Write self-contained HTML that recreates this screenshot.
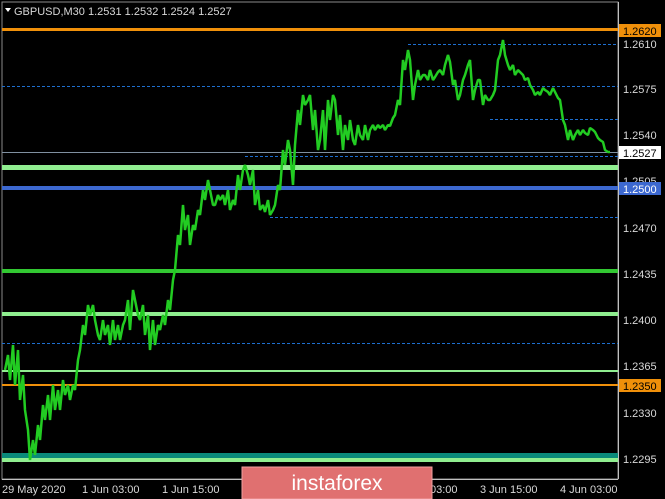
<!DOCTYPE html><html><head><style>
body{margin:0;background:#000;width:665px;height:499px;overflow:hidden;font-family:"Liberation Sans",sans-serif}
</style></head><body>
<svg width="665" height="499" xmlns="http://www.w3.org/2000/svg" style="position:absolute;left:0;top:0">
<rect width="665" height="499" fill="#000"/>
<rect x="2" y="2" width="616" height="477" fill="none" stroke="#8a8a8a" stroke-width="1"/>
<g stroke-dasharray="3,2" stroke="#1e6fd0" stroke-width="1">
<line x1="408" y1="44.5" x2="618" y2="44.5"/>
<line x1="2" y1="86.5" x2="618" y2="86.5"/>
<line x1="490" y1="119.5" x2="618" y2="119.5"/>
<line x1="245" y1="156.5" x2="618" y2="156.5"/>
<line x1="270" y1="217.5" x2="618" y2="217.5"/>
<line x1="2" y1="343.5" x2="618" y2="343.5"/>
</g>
<rect x="2" y="28" width="616" height="3" fill="#f0900a"/>
<line x1="2" y1="152.5" x2="618" y2="152.5" stroke="#8090a0"/>
<rect x="2" y="165" width="616" height="5" fill="#90ee90"/>
<rect x="2" y="186" width="616" height="4" fill="#3c68d0"/>
<rect x="2" y="269" width="616" height="4" fill="#32c832"/>
<rect x="2" y="312" width="616" height="4" fill="#90ee90"/>
<rect x="2" y="370" width="616" height="2" fill="#90ee90"/>
<rect x="2" y="384" width="616" height="2" fill="#f0900a"/>
<rect x="2" y="453" width="616" height="5" fill="#0a8a7a"/>
<rect x="2" y="458" width="616" height="4" fill="#90ee90"/>
<polyline fill="none" stroke="#22cc22" stroke-width="2.5" stroke-linejoin="bevel" points="5,370 8,355 10,380 13,345 15,385 18,350 20,400 23,375 25,410 28,430 30,460 33,440 35,455 38,425 40,440 43,405 45,420 48,395 50,420 53,385 55,410 58,390 60,410 63,380 65,395 68,385 70,400 73,385 75,390 78,360 80,350 83,325 85,335 88,305 90,315 93,305 95,320 98,335 100,340 103,320 105,335 108,325 110,345 113,320 115,340 118,325 120,340 123,325 125,320 128,300 130,330 133,290 135,300 138,315 140,320 143,305 145,335 148,315 150,350 153,320 155,345 158,325 160,330 163,315 165,325 168,300 170,310 173,280 175,270 178,235 180,245 183,205 185,230 188,215 190,245 193,225 195,230 198,210 200,215 203,190 205,200 208,180 210,190 213,205 215,205 218,195 220,200 223,195 225,205 228,190 230,210 233,200 235,205 238,175 240,190 243,170 245,165 248,175 250,185 253,170 255,205 258,190 260,210 263,205 265,212 268,200 270,215 273,210 275,205 278,185 280,190 283,150 285,165 288,140 290,150 293,185 295,145 298,110 300,125 303,95 305,105 308,100 310,95 313,130 315,110 318,150 320,140 323,110 325,150 328,100 330,120 333,95 335,100 338,135 340,115 343,150 345,125 348,140 350,120 353,140 355,145 358,125 360,135 363,140 365,125 368,140 370,130 373,125 375,130 378,125 380,128 383,125 385,130 388,125 390,126 393,118 395,115 398,100 400,105 403,60 405,70 408,50 410,60 413,100 415,85 418,70 420,80 423,75 425,75 428,80 430,70 433,80 435,77 438,72 440,70 443,75 445,65 448,55 450,62 453,85 455,80 458,100 460,95 463,80 465,75 468,65 470,60 473,100 475,90 478,80 480,80 483,105 485,95 488,100 490,100 493,95 495,90 498,60 500,55 503,40 505,55 508,65 510,70 513,65 515,75 518,70 520,72 523,75 525,80 528,78 530,85 533,90 535,95 538,92 540,95 543,88 545,90 548,92 550,95 553,88 555,92 558,98 560,100 563,120 565,125 568,140 570,130 573,140 575,135 578,130 580,135 583,130 585,133 588,135 590,128 593,130 595,132 598,138 600,140 603,142 605,150 608,152 610,152"/>
<line x1="618.5" y1="2" x2="618.5" y2="479" stroke="#c0c0c0"/>
<line x1="2" y1="479.5" x2="618" y2="479.5" stroke="#c0c0c0"/>
<g font-size="11" fill="#d8d8d8" font-family="Liberation Sans,sans-serif">
<path d="M5 8 L11 8 L8 12 Z" fill="#fff"/>
<text x="14" y="15">GBPUSD,M30  1.2531 1.2532 1.2524 1.2527</text>
<text x="623" y="48">1.2610</text>
<text x="623" y="93">1.2575</text>
<text x="623" y="139">1.2540</text>
<text x="623" y="185">1.2505</text>
<text x="623" y="232">1.2470</text>
<text x="623" y="278">1.2435</text>
<text x="623" y="324">1.2400</text>
<text x="623" y="370">1.2365</text>
<text x="623" y="417">1.2330</text>
<text x="623" y="463">1.2295</text>
<rect x="619" y="24" width="42" height="13" fill="#f0900a"/>
<text x="623" y="35" fill="#000">1.2620</text>
<rect x="619" y="146" width="42" height="13" fill="#fff"/>
<text x="623" y="157" fill="#000">1.2527</text>
<rect x="619" y="182" width="42" height="13" fill="#3c68d0"/>
<text x="623" y="193" fill="#fff">1.2500</text>
<rect x="619" y="379" width="42" height="13" fill="#f0900a"/>
<text x="623" y="390" fill="#000">1.2350</text>
<text x="2" y="493">29 May 2020</text>
<text x="82" y="493">1 Jun 03:00</text>
<text x="162" y="493">1 Jun 15:00</text>
<text x="400" y="493">3 Jun 03:00</text>
<text x="480" y="493">3 Jun 15:00</text>
<text x="560" y="493">4 Jun 03:00</text>
</g>
<rect x="242" y="467" width="190" height="32" fill="#e07070" stroke="#f0a0a0"/>
<text x="337" y="490" text-anchor="middle" font-size="21" fill="#fff" font-family="Liberation Sans,sans-serif">instaforex</text>
</svg>
</body></html>
